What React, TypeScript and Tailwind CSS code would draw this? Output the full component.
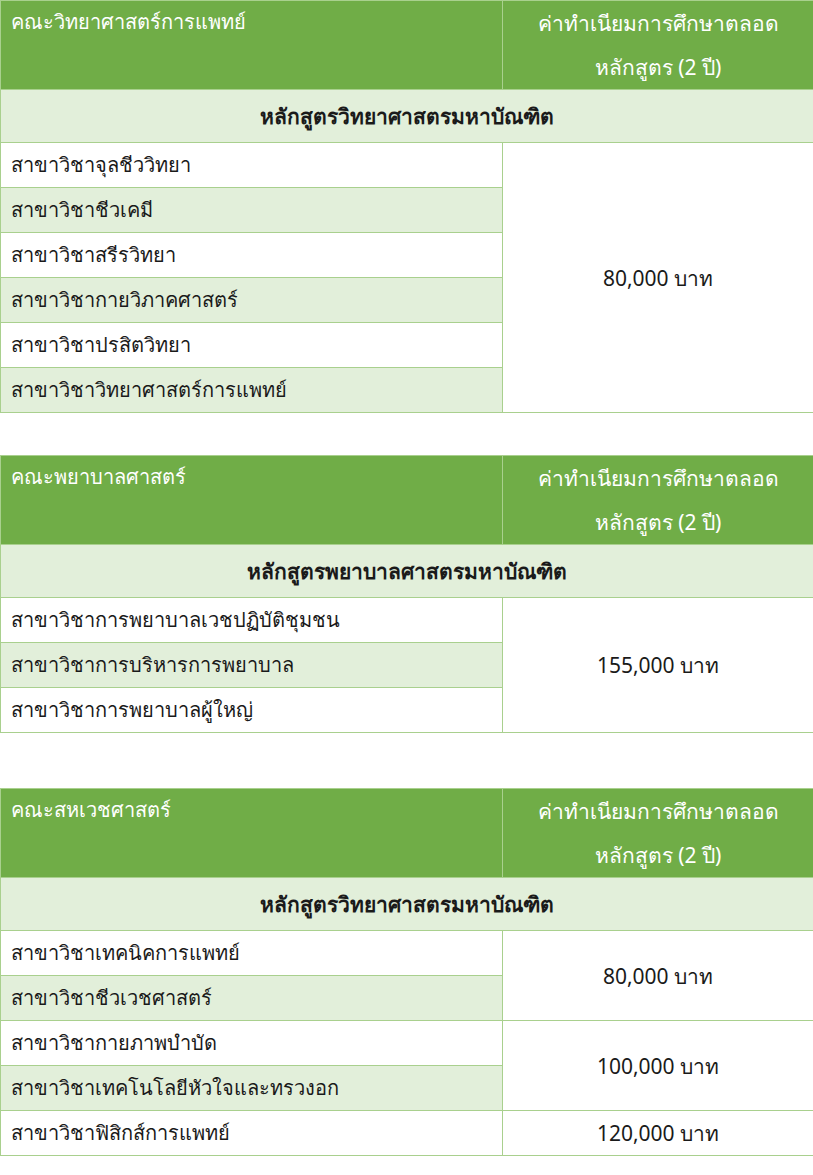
import React from 'react'

type Group = { rows: string[]; fee: string }

type Section = {
  faculty: string
  program: string
  groups: Group[]
}

const sections: Section[] = [
  {
    faculty: 'คณะวิทยาศาสตร์การแพทย์',
    program: 'หลักสูตรวิทยาศาสตรมหาบัณฑิต',
    groups: [
      {
        rows: [
          'สาขาวิชาจุลชีววิทยา',
          'สาขาวิชาชีวเคมี',
          'สาขาวิชาสรีรวิทยา',
          'สาขาวิชากายวิภาคศาสตร์',
          'สาขาวิชาปรสิตวิทยา',
          'สาขาวิชาวิทยาศาสตร์การแพทย์',
        ],
        fee: '80,000 บาท',
      },
    ],
  },
  {
    faculty: 'คณะพยาบาลศาสตร์',
    program: 'หลักสูตรพยาบาลศาสตรมหาบัณฑิต',
    groups: [
      {
        rows: [
          'สาขาวิชาการพยาบาลเวชปฏิบัติชุมชน',
          'สาขาวิชาการบริหารการพยาบาล',
          'สาขาวิชาการพยาบาลผู้ใหญ่',
        ],
        fee: '155,000 บาท',
      },
    ],
  },
  {
    faculty: 'คณะสหเวชศาสตร์',
    program: 'หลักสูตรวิทยาศาสตรมหาบัณฑิต',
    groups: [
      { rows: ['สาขาวิชาเทคนิคการแพทย์', 'สาขาวิชาชีวเวชศาสตร์'], fee: '80,000 บาท' },
      { rows: ['สาขาวิชากายภาพบำบัด', 'สาขาวิชาเทคโนโลยีหัวใจและทรวงอก'], fee: '100,000 บาท' },
      { rows: ['สาขาวิชาฟิสิกส์การแพทย์'], fee: '120,000 บาท' },
    ],
  },
]

function FeeTable({ section }: { section: Section }) {
  let rowIndex = 0
  return (
    <table className="w-[813px] table-fixed border-collapse text-[20px] leading-[36px] text-[#1a1a1a]">
      <colgroup>
        <col className="w-[502px]" />
        <col className="w-[311px]" />
      </colgroup>
      <thead>
        <tr className="bg-[#70ad47] text-white">
          <td className="h-[88px] border border-[#a9d08e] px-[10px] align-top leading-[42px]">{section.faculty}</td>
          <td className="h-[88px] border border-[#a9d08e] px-3 text-center text-[21px] leading-[44px]">
            ค่าทำเนียมการศึกษาตลอด
            <br />
            หลักสูตร (2 ปี)
          </td>
        </tr>
        <tr className="bg-[#e2efda]">
          <td colSpan={2} className="h-[53px] border border-[#a9d08e] text-center text-[21px] font-bold">
            {section.program}
          </td>
        </tr>
      </thead>
      <tbody>
        {section.groups.map((group) =>
          group.rows.map((name, i) => {
            const striped = rowIndex++ % 2 === 1
            return (
              <tr key={name}>
                <td className={`h-[45px] border border-[#a9d08e] px-[10px] ${striped ? 'bg-[#e2efda]' : 'bg-white'}`}>
                  {name}
                </td>
                {i === 0 && (
                  <td rowSpan={group.rows.length} className="border border-[#a9d08e] bg-white text-center text-[21px]">
                    {group.fee}
                  </td>
                )}
              </tr>
            )
          })
        )}
      </tbody>
    </table>
  )
}

export default function App() {
  return (
    <div className="w-[813px] bg-white font-['Noto_Sans',sans-serif]">
      <FeeTable section={sections[0]} />
      <div className="h-[42px]" />
      <FeeTable section={sections[1]} />
      <div className="h-[55px]" />
      <FeeTable section={sections[2]} />
    </div>
  )
}
